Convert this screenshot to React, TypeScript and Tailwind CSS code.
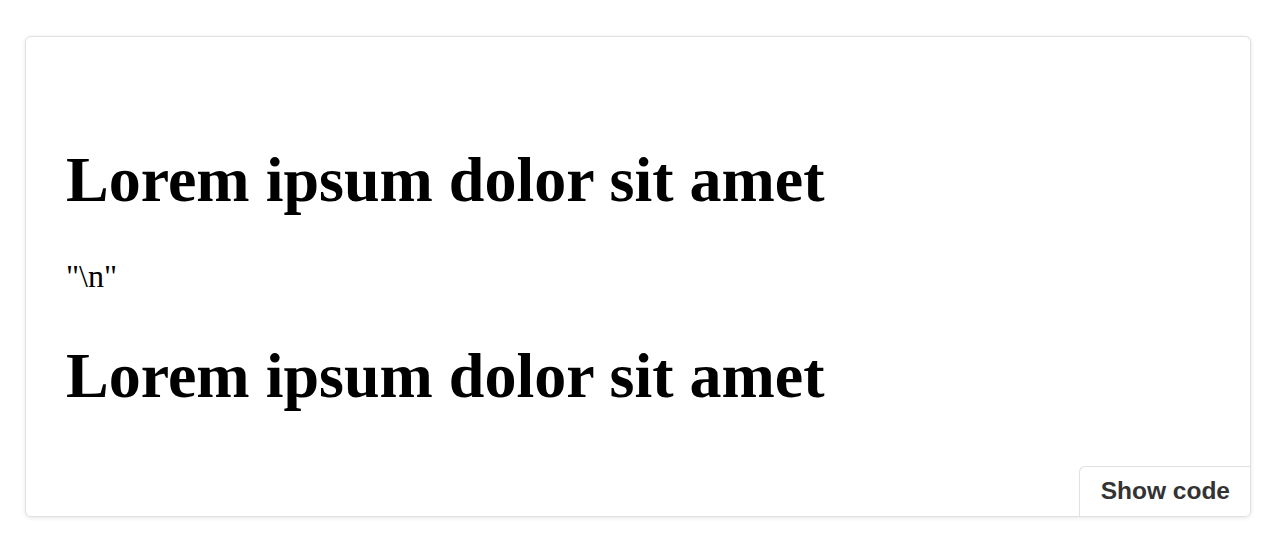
export default function App() {
  return (
    <div className="min-h-screen bg-white pt-[36px] px-[25px] font-['Liberation_Serif',serif] text-black">
      <section className="flex flex-col h-[481px] rounded-md border border-[#e1e1e1] bg-white shadow-[0_1px_4px_rgba(0,0,0,0.10)] overflow-hidden">
        <div className="flex-1 px-10 pt-[64px]">
          <h1 className="mt-[43px] text-[64px] leading-[71px] font-bold">Lorem ipsum dolor sit amet</h1>
          <p className="mt-[44px] text-[32px] leading-[35px]">"\n"</p>
          <h1 className="mt-[46px] text-[64px] leading-[71px] font-bold">Lorem ipsum dolor sit amet</h1>
        </div>
        <button className="self-end h-[50px] pl-[21px] pr-[20px] border-t border-l border-[#e1e1e1] rounded-tl-md bg-white font-['Liberation_Sans',Arial,sans-serif] text-[24.5px] font-bold text-[#333]">
          Show code
        </button>
      </section>
    </div>
  );
}
